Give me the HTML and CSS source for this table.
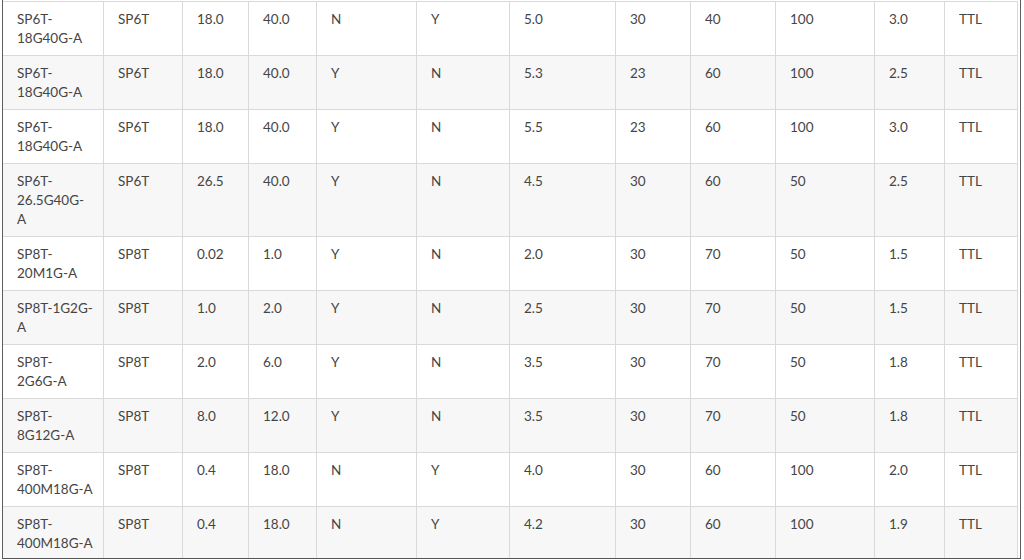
FILE: index.html
```html
<!DOCTYPE html>
<html lang="en">
<head>
<meta charset="utf-8">
<title>Switch specifications</title>
<link rel="stylesheet" href="styles.css">
</head>
<body>
<div class="frame">
<table class="specs">
<colgroup>
<col class="c1"><col class="c2"><col class="c3"><col class="c4"><col class="c5"><col class="c6">
<col class="c7"><col class="c8"><col class="c9"><col class="c10"><col class="c11"><col class="c12">
</colgroup>
<tbody>
<tr><td class="model"><span class="seg">SP6T-</span><span class="seg">18G40G-A</span></td><td>SP6T</td><td>18.0</td><td>40.0</td><td>N</td><td>Y</td><td>5.0</td><td>30</td><td>40</td><td>100</td><td>3.0</td><td>TTL</td></tr>
<tr><td class="model"><span class="seg">SP6T-</span><span class="seg">18G40G-A</span></td><td>SP6T</td><td>18.0</td><td>40.0</td><td>Y</td><td>N</td><td>5.3</td><td>23</td><td>60</td><td>100</td><td>2.5</td><td>TTL</td></tr>
<tr><td class="model"><span class="seg">SP6T-</span><span class="seg">18G40G-A</span></td><td>SP6T</td><td>18.0</td><td>40.0</td><td>Y</td><td>N</td><td>5.5</td><td>23</td><td>60</td><td>100</td><td>3.0</td><td>TTL</td></tr>
<tr><td class="model"><span class="seg">SP6T-</span><span class="seg">26.5G40G-</span><span class="seg">A</span></td><td>SP6T</td><td>26.5</td><td>40.0</td><td>Y</td><td>N</td><td>4.5</td><td>30</td><td>60</td><td>50</td><td>2.5</td><td>TTL</td></tr>
<tr><td class="model"><span class="seg">SP8T-</span><span class="seg">20M1G-A</span></td><td>SP8T</td><td>0.02</td><td>1.0</td><td>Y</td><td>N</td><td>2.0</td><td>30</td><td>70</td><td>50</td><td>1.5</td><td>TTL</td></tr>
<tr><td class="model"><span class="seg">SP8T-1G2G-</span><span class="seg">A</span></td><td>SP8T</td><td>1.0</td><td>2.0</td><td>Y</td><td>N</td><td>2.5</td><td>30</td><td>70</td><td>50</td><td>1.5</td><td>TTL</td></tr>
<tr><td class="model"><span class="seg">SP8T-</span><span class="seg">2G6G-A</span></td><td>SP8T</td><td>2.0</td><td>6.0</td><td>Y</td><td>N</td><td>3.5</td><td>30</td><td>70</td><td>50</td><td>1.8</td><td>TTL</td></tr>
<tr><td class="model"><span class="seg">SP8T-</span><span class="seg">8G12G-A</span></td><td>SP8T</td><td>8.0</td><td>12.0</td><td>Y</td><td>N</td><td>3.5</td><td>30</td><td>70</td><td>50</td><td>1.8</td><td>TTL</td></tr>
<tr><td class="model"><span class="seg">SP8T-</span><span class="seg">400M18G-A</span></td><td>SP8T</td><td>0.4</td><td>18.0</td><td>N</td><td>Y</td><td>4.0</td><td>30</td><td>60</td><td>100</td><td>2.0</td><td>TTL</td></tr>
<tr><td class="model"><span class="seg">SP8T-</span><span class="seg">400M18G-A</span></td><td>SP8T</td><td>0.4</td><td>18.0</td><td>N</td><td>Y</td><td>4.2</td><td>30</td><td>60</td><td>100</td><td>1.9</td><td>TTL</td></tr>
</tbody>
</table>
</div>
</body>
</html>
```

FILE: styles.css
```css
html, body {
  margin: 0;
  padding: 0;
  background: #ffffff;
}

.frame {
  box-sizing: border-box;
  margin: 0 3px 0 2px;
  height: 559px;
  border-left: 1px solid #5e5e5e;
  border-right: 1px solid #5e5e5e;
  border-bottom: 1px solid #555555;
  overflow: hidden;
}

.specs {
  width: 1015px;
  margin-top: 1px;
  table-layout: fixed;
  border-collapse: separate;
  border-spacing: 0;
  font-family: Lato, "Liberation Sans", sans-serif;
  font-size: 13.5px;
  line-height: 19px;
  color: #454545;
}

.specs td {
  box-sizing: border-box;
  padding: 8px 10px 7px 14px;
  vertical-align: top;
  border-top: 1px solid #d9d9d9;
  border-right: 1px solid #d9d9d9;
}

.specs td.model {
  padding-right: 12px;
}

.seg {
  display: inline-block;
  white-space: nowrap;
}

.specs tr:nth-child(even) td {
  background: #f7f7f7;
}

.c1 { width: 101px; }
.c2 { width: 79px; }
.c3 { width: 66px; }
.c4 { width: 68px; }
.c5 { width: 100px; }
.c6 { width: 93px; }
.c7 { width: 106px; }
.c8 { width: 75px; }
.c9 { width: 85px; }
.c10 { width: 99px; }
.c11 { width: 70px; }
.c12 { width: 73px; }
```
